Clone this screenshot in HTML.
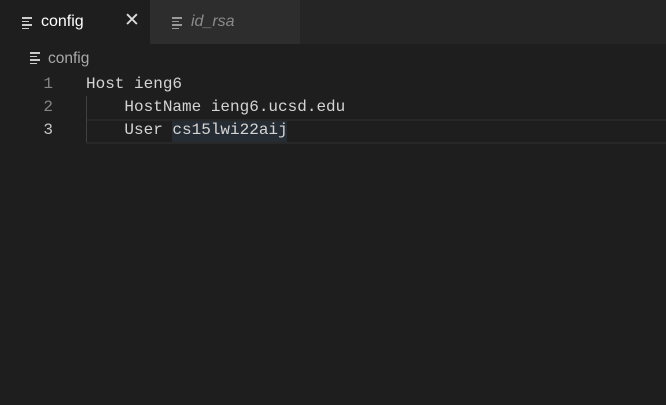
<!DOCTYPE html>
<html><head><style>
body{margin:0;width:666px;height:405px;background:#1e1e1e;overflow:hidden;position:relative;font-family:"Liberation Sans",sans-serif}
.tabs{position:absolute;left:0;top:0;width:666px;height:44px;background:#252526}
.tab{position:absolute;top:0;height:44px;width:150px;box-sizing:border-box}
.t1{left:0;background:#1e1e1e;color:#fff}
.t2{left:150px;background:#2d2d2d;color:#8b8b8b;font-style:italic}
.lbl{position:absolute;top:13px;font-size:16px}
.ic{position:absolute;width:10px}
.ic i{display:block;height:1.5px;background:currentColor;margin-bottom:2px}
.x{position:absolute;left:124px;top:9px;font-size:19px;color:#ddd;font-style:normal}
.mono{font-family:"Liberation Mono",monospace;font-size:16px;color:#d4d4d4;position:absolute;white-space:pre}
.ln{color:#858585;text-align:right;width:20px;left:33px}
</style></head><body>
<div class="tabs">
 <div class="tab t1">
  <div class="ic" style="left:22px;top:17px;color:#ccc"><i></i><i style="width:7px"></i><i></i><i style="width:7px"></i></div>
  <div class="lbl" style="left:41px">config</div>
  <div class="x">✕</div>
 </div>
 <div class="tab t2">
  <div class="ic" style="left:22px;top:17px;color:#999"><i></i><i style="width:7px"></i><i></i><i style="width:7px"></i></div>
  <div class="lbl" style="left:41px">id_rsa</div>
 </div>
</div>
<div class="ic" style="left:30px;top:52px;color:#ccc"><i></i><i style="width:7px"></i><i></i><i style="width:7px"></i></div>
<div style="position:absolute;left:48px;top:50px;font-size:15.5px;color:#a9a9a9">config</div>
<div style="position:absolute;left:86px;top:119px;right:0;height:21px;border-top:2px solid #282828;border-bottom:2px solid #282828"></div>
<div style="position:absolute;left:86px;top:96px;width:1px;height:46px;background:#404040"></div>
<div style="position:absolute;left:172px;top:121px;width:115px;height:21px;background:#262c33"></div>
<div class="mono ln" style="top:75px">1</div>
<div class="mono ln" style="top:98px">2</div>
<div class="mono ln" style="top:121px;color:#c6c6c6">3</div>
<div class="mono" style="left:86px;top:75px">Host ieng6</div>
<div class="mono" style="left:86px;top:98px">    HostName ieng6.ucsd.edu</div>
<div class="mono" style="left:86px;top:121px">    User cs15lwi22aij</div>
</body></html>
